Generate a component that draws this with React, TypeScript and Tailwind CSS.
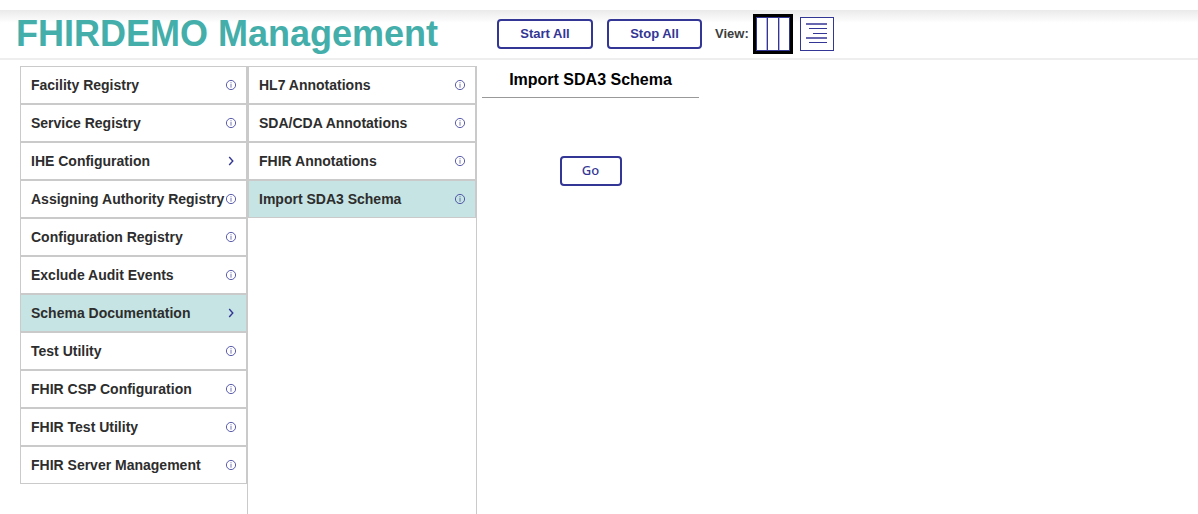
type Entry = { label: string; submenu?: boolean; selected?: boolean };

const mainMenu: Entry[] = [
  { label: "Facility Registry" },
  { label: "Service Registry" },
  { label: "IHE Configuration", submenu: true },
  { label: "Assigning Authority Registry" },
  { label: "Configuration Registry" },
  { label: "Exclude Audit Events" },
  { label: "Schema Documentation", submenu: true, selected: true },
  { label: "Test Utility" },
  { label: "FHIR CSP Configuration" },
  { label: "FHIR Test Utility" },
  { label: "FHIR Server Management" },
];

const schemaMenu: Entry[] = [
  { label: "HL7 Annotations" },
  { label: "SDA/CDA Annotations" },
  { label: "FHIR Annotations" },
  { label: "Import SDA3 Schema", selected: true },
];

function InfoIcon() {
  return (
    <svg className="size-3 shrink-0" viewBox="0 0 12 12" fill="none" stroke="#333695" aria-hidden="true">
      <circle cx="6" cy="6" r="4.6" strokeWidth="0.8" />
      <path d="M6 5v3.7M6 3.2v1.1" strokeWidth="0.9" strokeOpacity="0.75" />
    </svg>
  );
}

function ChevronIcon() {
  return (
    <svg className="size-3 shrink-0" viewBox="0 0 12 12" fill="none" stroke="#333695" aria-hidden="true">
      <path d="M4.2 2l3.6 4-3.6 4" strokeWidth="1.4" />
    </svg>
  );
}

function MenuColumn({ label, items, width }: { label: string; items: Entry[]; width: string }) {
  return (
    <nav aria-label={label} className={`${width} shrink-0 border-r border-[#cacaca]`}>
      <ul>
        {items.map((item) => (
          <li key={item.label}>
            <a
              href="#"
              aria-current={item.selected ? "true" : undefined}
              className={`flex h-[38px] items-center justify-between border border-[#cacaca] pr-[9px] pl-[10px] text-sm font-bold whitespace-nowrap text-[#2d2d2d] ${
                item.selected ? "bg-[#c6e4e3]" : "bg-white"
              }`}
            >
              {item.label}
              {item.submenu ? <ChevronIcon /> : <InfoIcon />}
            </a>
          </li>
        ))}
      </ul>
    </nav>
  );
}

const buttonStyle =
  "h-[30px] rounded-[4px] border-2 border-[#333695] bg-white text-[13px] text-[#333695]";

export default function App() {
  return (
    <div className="flex min-h-screen flex-col bg-white pt-[10px] font-['Liberation_Sans',Arial,sans-serif]">
      <header className="flex h-[50px] items-center border-b-2 border-[#eeeeee] bg-linear-to-b from-[#eaeaea] to-white to-[13px] pl-4">
        <h1 className="w-[481px] text-4xl leading-none font-bold whitespace-nowrap text-[#43aeaa]">
          FHIRDEMO Management
        </h1>
        <div className="flex items-center">
          <button type="button" className={`${buttonStyle} w-24 font-bold`}>Start All</button>
          <button type="button" className={`${buttonStyle} ml-[14px] w-[95px] font-bold`}>Stop All</button>
          <span className="ml-[13px] text-[13px] font-bold text-[#3d3d3d]">View:</span>
          <button type="button" aria-label="Column view" aria-pressed="true" className="ml-1 bg-black p-[3px]">
            <svg className="size-[34px]" viewBox="0 0 34 34" aria-hidden="true">
              <rect x="0.5" y="0.5" width="33" height="33" fill="#fff" stroke="#333695" />
              <path d="M11.5 1v32M22.5 1v32" stroke="#333695" />
              <path d="M10.5 1v32M23.5 1v32" stroke="#b4b5da" />
            </svg>
          </button>
          <button type="button" aria-label="List view" aria-pressed="false" className="ml-[7px]">
            <svg className="size-[34px]" viewBox="0 0 34 34" aria-hidden="true">
              <rect x="0.5" y="0.5" width="33" height="33" fill="#fff" stroke="#333695" />
              <path d="M6 7h21M6 21h21" stroke="#6667ae" strokeWidth="2" />
              <path d="M9 11.5h18M13 16.5h14M9 25.5h18" stroke="#333695" />
            </svg>
          </button>
        </div>
      </header>
      <div className="flex grow pt-[6px] pl-5">
        <MenuColumn label="Management" items={mainMenu} width="w-[228px]" />
        <MenuColumn label="Schema documentation" items={schemaMenu} width="w-[229px]" />
        <main className="ml-[5px] flex w-[217px] flex-col items-center">
          <h2 className="flex h-8 w-full items-center justify-center border-b border-[#999999] pb-1 text-base font-bold text-black">
            Import SDA3 Schema
          </h2>
          <button type="button" className={`${buttonStyle} mt-[58px] w-[62px] font-['Noto_Sans',sans-serif] font-medium`}>
            Go
          </button>
        </main>
      </div>
    </div>
  );
}
